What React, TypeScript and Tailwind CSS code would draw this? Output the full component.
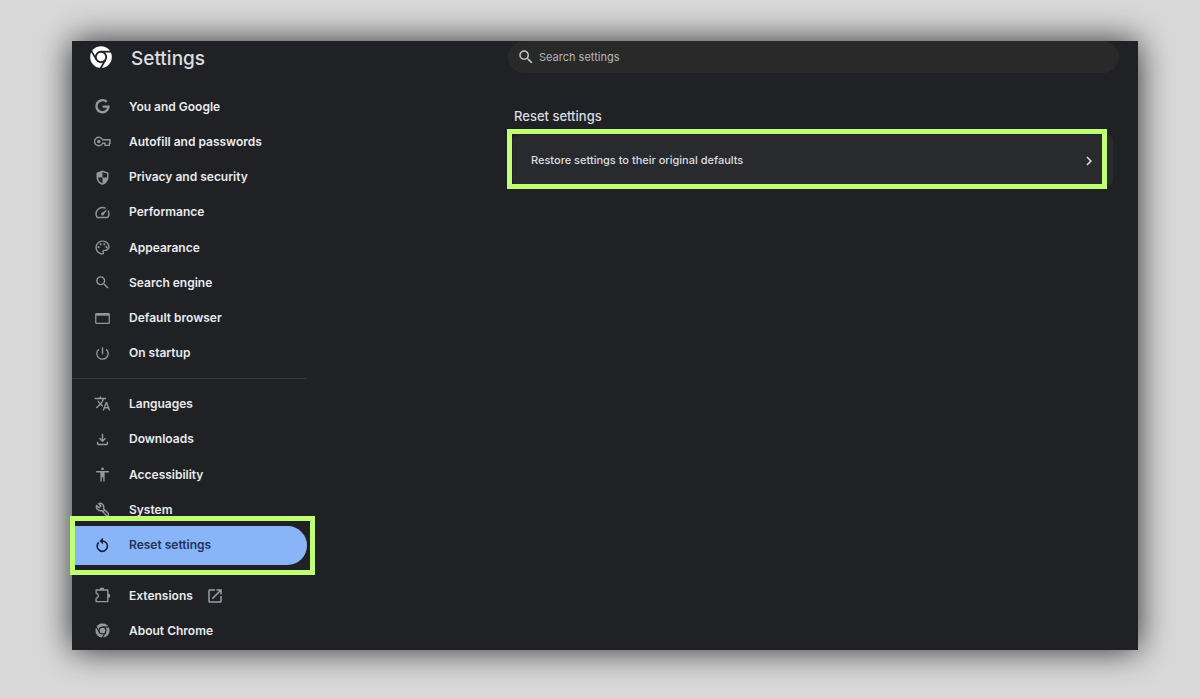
import type { ComponentType, ReactNode } from "react";
import {
  MdAccessibility,
  MdChevronRight,
  MdOpenInNew,
  MdOutlineFileDownload,
  MdOutlinePalette,
  MdOutlineSpeed,
  MdPowerSettingsNew,
  MdSearch,
  MdTranslate,
} from "react-icons/md";

type IconProps = { className?: string };

function ChromeMark({ className, viewBox, id }: IconProps & { viewBox: string; id: string }) {
  return (
    <svg viewBox={viewBox} className={className} aria-hidden="true">
      <mask id={id}>
        <circle cx="12" cy="12" r="11.8" fill="white" />
        <g stroke="black" strokeWidth="1.9" fill="none">
          <path d="M12 6.2H24" />
          <path d="M12 6.2H24" transform="rotate(120 12 12)" />
          <path d="M12 6.2H24" transform="rotate(240 12 12)" />
        </g>
        <circle cx="12" cy="12" r="6.7" fill="black" />
        <circle cx="12" cy="12" r="4.7" fill="white" />
      </mask>
      <rect width="24" height="24" fill="currentColor" mask={`url(#${id})`} />
    </svg>
  );
}

function ChromeLogo({ className }: IconProps) {
  return <ChromeMark className={className} viewBox="0 0 24 24" id="chrome-logo" />;
}

function ChromeIcon({ className }: IconProps) {
  return <ChromeMark className={className} viewBox="-2 -2 28 28" id="chrome-small" />;
}

function GoogleIcon({ className }: IconProps) {
  return (
    <svg viewBox="0 0 24 24" className={className} aria-hidden="true" fill="none" stroke="currentColor" strokeWidth="3.4">
      <path d="M18 5.6A8.5 8.5 0 1 0 20.4 12.2H12.2" />
    </svg>
  );
}

function KeyIcon({ className }: IconProps) {
  return (
    <svg viewBox="0 0 24 24" className={className} aria-hidden="true" fill="none" stroke="currentColor" strokeWidth="1.9">
      <path d="M12.2 9.5A6 6 0 1 0 12.2 14.5H15.6V17.4H21.6V14.5H22.6V9.5Z" />
      <circle cx="6.8" cy="12" r="2.4" fill="currentColor" stroke="none" />
    </svg>
  );
}

function ShieldIcon({ className }: IconProps) {
  return (
    <svg viewBox="0 0 24 24" className={className} aria-hidden="true" fill="currentColor">
      <path
        fillRule="evenodd"
        d="M12 2 3.5 5.2v6c0 5.1 3.6 9.9 8.5 11.1 4.9-1.2 8.500-6 8.500-11.100v-6zM12 4.200V12h6.400c.1-.5.1-.9.1-1.4V6.600zM12 12H5.600c.6 3.900 3.200 7.200 6.400 8.200z"
      />
    </svg>
  );
}

function WindowIcon({ className }: IconProps) {
  return (
    <svg viewBox="0 0 24 24" className={className} aria-hidden="true" fill="none" stroke="currentColor">
      <rect x="2.5" y="5" width="19" height="14" rx="1" strokeWidth="1.8" />
      <path d="M2.5 6.5h19" strokeWidth="3" />
    </svg>
  );
}

function WrenchIcon({ className }: IconProps) {
  return (
    <svg viewBox="0 0 24 24" className={className} aria-hidden="true" fill="none" stroke="currentColor" strokeWidth="2" strokeLinejoin="round">
      <path d="M6.5 3.6 9.8 6.9 7 9.7 3.7 6.4A5.6 5.6 0 0 0 10.7 13.5L17.3 20.1A1.9 1.9 0 0 0 20 17.4L13.5 10.8A5.6 5.6 0 0 0 6.5 3.6Z" />
      <path d="M12.5 15.3l2.8-2.8" />
    </svg>
  );
}

function PuzzleIcon({ className }: IconProps) {
  return (
    <svg viewBox="0 0 24 24" className={className} aria-hidden="true" fill="none" stroke="currentColor" strokeWidth="1.9">
      <path d="M3 4.2H19.5V20.7H3V16A3.6 3.6 0 0 0 3 8.900Z" strokeLinejoin="round" />
      <path d="M7.800 4.200a3.400 3.400 0 0 1 6.800 0zM19.500 9a3.400 3.400 0 0 1 0 6.800z" fill="currentColor" stroke="none" />
    </svg>
  );
}

function ResetIcon({ className }: IconProps) {
  return (
    <svg viewBox="0 0 24 24" className={className} aria-hidden="true">
      <path d="M6.6 7.7A7.3 7.3 0 1 0 12 5.6" fill="none" stroke="currentColor" strokeWidth="2.3" />
      <path d="M12.8 1v9.4L7.6 5.7z" fill="currentColor" />
    </svg>
  );
}

type Item = { label: string; icon: ComponentType<IconProps>; external?: boolean };

const browserItems: Item[] = [
  { label: "You and Google", icon: GoogleIcon },
  { label: "Autofill and passwords", icon: KeyIcon },
  { label: "Privacy and security", icon: ShieldIcon },
  { label: "Performance", icon: MdOutlineSpeed },
  { label: "Appearance", icon: MdOutlinePalette },
  { label: "Search engine", icon: MdSearch },
  { label: "Default browser", icon: WindowIcon },
  { label: "On startup", icon: MdPowerSettingsNew },
];

const advancedItems: Item[] = [
  { label: "Languages", icon: MdTranslate },
  { label: "Downloads", icon: MdOutlineFileDownload },
  { label: "Accessibility", icon: MdAccessibility },
  { label: "System", icon: WrenchIcon },
];

const footerItems: Item[] = [
  { label: "Extensions", icon: PuzzleIcon, external: true },
  { label: "About Chrome", icon: ChromeIcon },
];

function NavLink({ label, icon: Icon, external }: Item) {
  return (
    <li className="flex flex-1">
      <a href="#" className="flex flex-1 items-center pl-[22px] text-[#e8eaed]">
        <Icon className="mr-[18px] size-[17px] text-[#94979c]" />
        {label}
        {external && <MdOpenInNew className="ml-[13px] size-[18px] text-[#9aa0a6]" />}
      </a>
    </li>
  );
}

function NavGroup({ className, children }: { className: string; children: ReactNode }) {
  return <ul className={`flex flex-col ${className}`}>{children}</ul>;
}

export default function App() {
  return (
    <div className="flex min-h-screen bg-[#d9d9d9] pt-[41px] pr-[62px] pb-12 pl-[72px] font-['Inter','Liberation_Sans',sans-serif]">
      <div className="flex flex-1 bg-[#202124] shadow-[0_0_32px_rgba(0,0,0,0.8)]">
        <aside className="w-[235px] shrink-0">
          <header className="flex h-12 items-start gap-[19px] pt-1 pl-[18px]">
            <ChromeLogo className="mt-px size-[22px] text-white" />
            <h1 className="text-[19px] leading-7 font-medium text-[#dcdde0]">Settings</h1>
          </header>
          <nav className="text-xs font-semibold">
            <NavGroup className="h-[282px]">
              {browserItems.map((item) => (
                <NavLink key={item.label} {...item} />
              ))}
            </NavGroup>
            <hr className="my-[7px] border-[#36373b]" />
            <NavGroup className="h-[177px]">
              {advancedItems.map((item) => (
                <NavLink key={item.label} {...item} />
              ))}
              <li className="relative flex flex-1 items-center">
                <a
                  href="#"
                  aria-current="page"
                  className="-my-1 flex h-[39px] flex-1 items-center rounded-r-full bg-[#8ab4f8] pl-[22px] text-[#22345a]"
                >
                  <ResetIcon className="mr-[18px] size-[17px] text-[#14213d]" />
                  Reset settings
                </a>
                <div className="pointer-events-none absolute -top-3 -right-2 -bottom-3 -left-0.5 border-5 border-[#c0ff75]" />
              </li>
            </NavGroup>
            <NavGroup className="mt-[15px] h-[70px]">
              {footerItems.map((item) => (
                <NavLink key={item.label} {...item} />
              ))}
            </NavGroup>
          </nav>
        </aside>

        <main className="ml-[201px] flex-1 pr-[19px]">
          <label className="flex h-8 items-center gap-1 rounded-full bg-[#292929] pl-[9px] text-[#c4c7cb]">
            <MdSearch className="size-[18px]" />
            <input
              type="text"
              aria-label="Search settings"
              placeholder="Search settings"
              className="flex-1 bg-transparent text-[11px] outline-none placeholder:text-[#b4b6ba]"
            />
          </label>
          <section className="mt-[33px] pr-[6px] pl-[5px]">
            <h2 className="pl-px text-[13px] leading-5 font-medium text-[#dadce0]">Reset settings</h2>
            <div className="relative mt-[9px]">
              <button
                type="button"
                className="flex h-[51px] w-full items-center justify-between rounded-md bg-[#292a2e] pr-[15px] pl-[18px] text-[11px] font-medium text-[#dcdde0]"
              >
                Restore settings to their original defaults
                <MdChevronRight className="size-[18px]" />
              </button>
              <div className="pointer-events-none absolute -top-1.5 right-[6px] -bottom-[3px] -left-1.5 border-5 border-[#c0ff75]" />
            </div>
          </section>
        </main>
      </div>
    </div>
  );
}
